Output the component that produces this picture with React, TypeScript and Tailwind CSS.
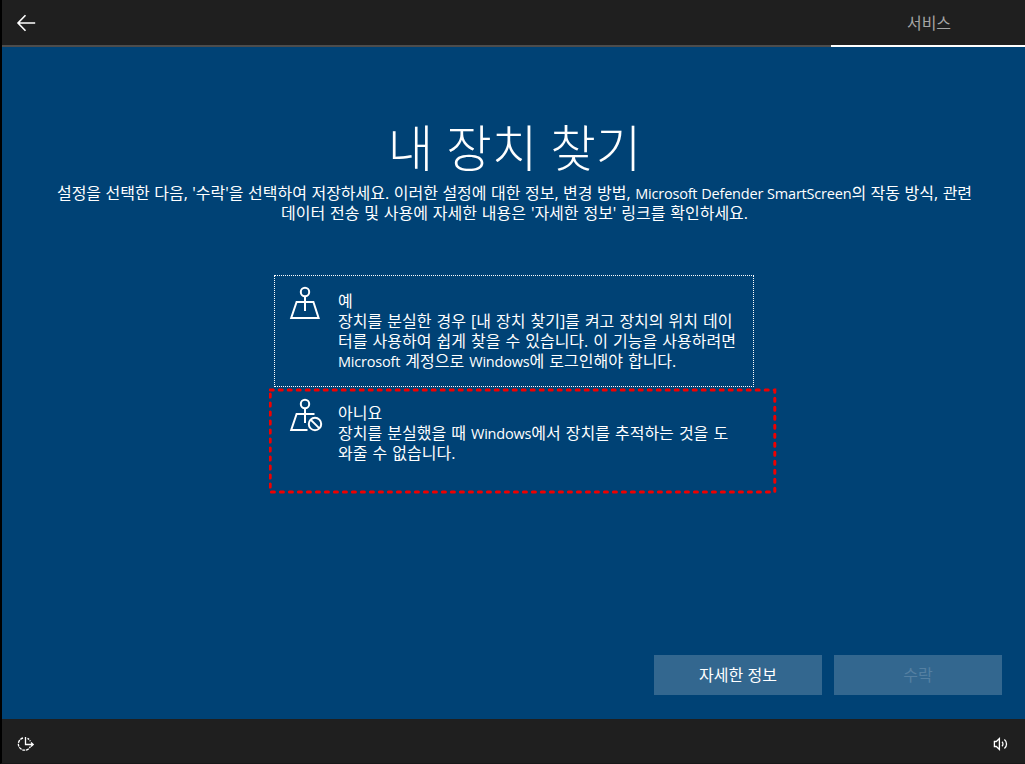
import type { ReactNode } from 'react'

function PinIcon({ blocked = false }: { blocked?: boolean }) {
  return (
    <svg width="34" height="34" viewBox="0 0 34 34" fill="none" stroke="white" strokeWidth="2" className="block shrink-0">
      <circle cx="16" cy="6" r="4.2" />
      <path d="M16 10v15" />
      {blocked ? (
        <>
          <path d="M25.5 16H7.6L2.2 32H18.5" />
          <circle cx="26" cy="26" r="6.2" />
          <path d="M21.6 21.6l8.8 8.8" />
        </>
      ) : (
        <path d="M7.6 16h16.8l5.2 16H2.2z" />
      )}
    </svg>
  )
}

function BackIcon() {
  return (
    <svg width="20" height="18" viewBox="0 0 20 18" fill="none" stroke="white" strokeWidth="1.6">
      <path d="M2.2 9h17M9.5 1.2L2 9l7.5 7.8" />
    </svg>
  )
}

function EaseOfAccessIcon() {
  return (
    <svg width="18" height="16" viewBox="0 0 18 16" fill="none" stroke="white" strokeWidth="1.3">
      <path d="M8.5 1v7.5H16M14 6.5l2.2 2-2.2 2" />
      <path d="M6 2A6.2 6.2 0 0 0 7.5 14.2 6.2 6.2 0 0 0 13.4 10.6" strokeDasharray="3 0.8" />
      <path d="M10.5 2.3a6.2 6.2 0 0 1 2.8 3" strokeDasharray="2 1" />
    </svg>
  )
}

function VolumeIcon() {
  return (
    <svg width="16" height="14" viewBox="0 0 16 14" fill="none" stroke="white" strokeWidth="1.3">
      <path d="M1.4 4.5h1.9L6.4 1.6v10.8L3.3 9.5H1.4z" />
      <path d="M9 4.8a3 3 0 0 1 0 4.4M11.4 2.5a5.8 5.8 0 0 1 0 9" />
    </svg>
  )
}

function Latin({ children }: { children: ReactNode }) {
  return <span className="text-[14.5px] leading-none tracking-[-0.2px]">{children}</span>
}

function Option({ title, icon, children }: { title: string; icon: ReactNode; children: ReactNode }) {
  return (
    <div className="flex gap-[15px] pl-[14px] pt-[10px]">
      {icon}
      <div className="whitespace-nowrap pt-[5px] [word-spacing:0.9px]">
        <h2>{title}</h2>
        {children}
      </div>
    </div>
  )
}

export default function App() {
  return (
    <div className="flex h-[764px] w-[1025px] flex-col overflow-hidden border-l-2 border-b border-l-black border-b-[#181818] bg-[#004275] font-['Open_Sans','Noto_Sans_CJK_KR',sans-serif] text-base leading-5 text-white">
      <header className="flex h-[47px] shrink-0 bg-[#1f1f1f]">
        <div className="flex flex-1 items-center border-b-2 border-[#4c4c4c] pl-[14px]">
          <BackIcon />
        </div>
        <div className="flex w-[194px] items-center justify-center border-b-2 border-white pl-[2px] text-[#a5a5a5]">
          <span>서비스</span>
        </div>
      </header>

      <main className="flex flex-1 flex-col">
        <h1 className="mt-[67px] pl-[2px] text-center font-['Noto_Sans_CJK_KR',sans-serif] text-[49.5px] font-light leading-[64px] [word-spacing:2px]">내 장치 찾기</h1>
        <div className="mt-[5px] whitespace-nowrap pl-[2px] text-center">
          <p className="[word-spacing:0.35px]">설정을 선택한 다음, '수락'을 선택하여 저장하세요. 이러한 설정에 대한 정보, 변경 방법, <Latin>Microsoft Defender SmartScreen</Latin>의 작동 방식, 관련</p>
          <p className="[word-spacing:0.7px]">데이터 전송 및 사용에 자세한 내용은 '자세한 정보' 링크를 확인하세요.</p>
        </div>

        <div className="ml-[272px] mt-[52px] h-[112px] w-[480px] border border-dotted border-white">
          <Option title="예" icon={<PinIcon />}>
            <p>장치를 분실한 경우 [내 장치 찾기]를 켜고 장치의 위치 데이</p>
            <p>터를 사용하여 쉽게 찾을 수 있습니다. 이 기능을 사용하려면</p>
            <p><Latin>Microsoft</Latin> 계정으로 <Latin>Windows</Latin>에 로그인해야 합니다.</p>
          </Option>
        </div>
        <div className="relative ml-[267px] mt-px h-[106px] w-[508px]">
          <svg width="508" height="106" className="absolute inset-0" fill="none" stroke="#f00000" strokeWidth="3" strokeLinecap="round">
            <rect x="1.2" y="1.9" width="504.6" height="102" strokeDasharray="3 6" />
          </svg>
          <div className="pl-[6px]">
            <Option title="아니요" icon={<PinIcon blocked />}>
              <p>장치를 분실했을 때 <Latin>Windows</Latin>에서 장치를 추적하는 것을 도</p>
              <p>와줄 수 없습니다.</p>
            </Option>
          </div>
        </div>

        <div className="mb-6 mt-auto flex justify-end gap-3 pr-[23px] [word-spacing:1px]">
          <button className="h-10 w-[168px] bg-[#33678f]">자세한 정보</button>
          <button className="h-10 w-[168px] bg-[#33678f] text-[#5580a2]" disabled>수락</button>
        </div>
      </main>

      <footer className="flex h-11 shrink-0 items-center justify-between bg-[#1f1f1f] pl-[15px] pr-4 pt-[6px]">
        <EaseOfAccessIcon />
        <VolumeIcon />
      </footer>
    </div>
  )
}
